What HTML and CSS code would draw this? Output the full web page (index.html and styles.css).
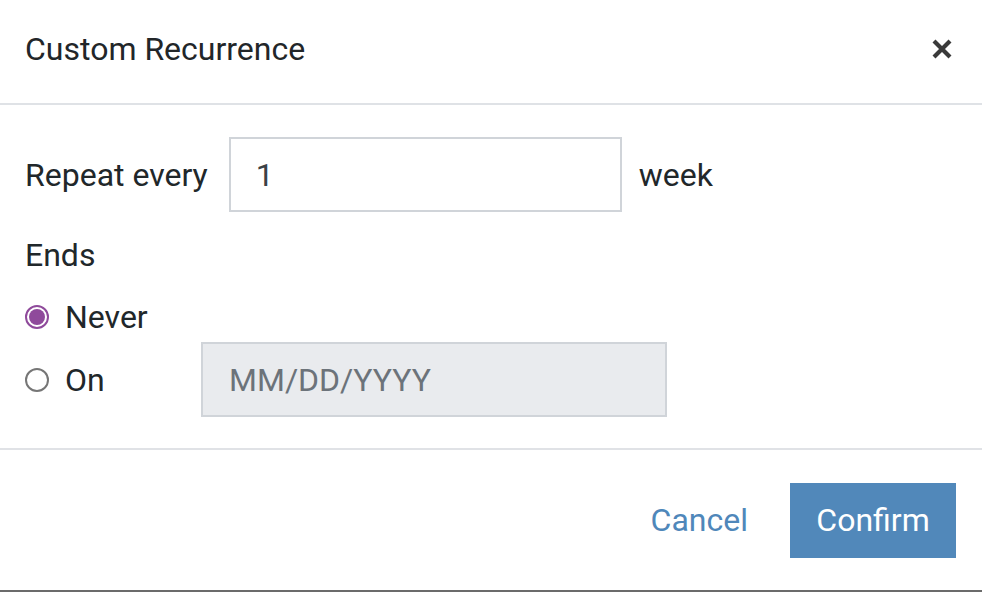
FILE: index.html
```html
<!DOCTYPE html>
<html>
<head>
<meta charset="utf-8">
<link rel="stylesheet" href="styles.css">
</head>
<body>
<div class="modal">
  <div class="header">
    <h1 class="title">Custom Recurrence</h1>
    <button class="close" aria-label="Close">
      <svg width="22" height="22" viewBox="0 0 22 22"><path d="M3 3 L19 19 M19 3 L3 19" stroke="#3a3a3a" stroke-width="4.2" stroke-linecap="butt"/></svg>
    </button>
  </div>
  <div class="content">
    <div class="repeat-row">
      <span class="label">Repeat every</span>
      <div class="input num">1</div>
      <span class="label">week</span>
    </div>
    <div class="ends">Ends</div>
    <div class="radio-row never">
      <span class="radio checked"></span>
      <span class="label">Never</span>
    </div>
    <div class="radio-row on">
      <span class="radio"></span>
      <span class="label on-label">On</span>
      <div class="input date">MM/DD/YYYY</div>
    </div>
  </div>
  <div class="footer">
    <span class="cancel">Cancel</span>
    <span class="confirm">Confirm</span>
  </div>
</div>
</body>
</html>
```
FILE: styles.css
```css
html, body {
  margin: 0;
  padding: 0;
  background: #ffffff;
}
body {
  font-family: Roboto, "Liberation Sans", sans-serif;
  color: #21272a;
}
.modal {
  width: 982px;
  height: 592px;
  box-sizing: border-box;
  border-bottom: 2px solid #6b6b6b;
  display: flex;
  flex-direction: column;
}
.header {
  border-bottom: 2px solid #dfe2e6;
  display: flex;
  align-items: center;
  justify-content: space-between;
  padding: 0 29px 6px 25px;
  box-sizing: border-box;
  height: 105px;
}
.title {
  margin: 0;
  font-size: 32px;
  font-weight: 400;
  color: #222629;
}
.close {
  border: 0;
  background: none;
  padding: 0;
  width: 22px;
  height: 22px;
  display: flex;
}
.content {
  padding: 32px 25px 0 25px;
  height: 345px;
  box-sizing: border-box;
  border-bottom: 2px solid #e0e2e6;
}
.label {
  font-size: 32px;
}
.repeat-row {
  display: flex;
  align-items: center;
  height: 75px;
}
.input {
  box-sizing: border-box;
  height: 75px;
  border: 2px solid #d0d4d9;
  font-size: 32px;
  display: flex;
  align-items: center;
  padding-left: 25px;
}
.repeat-row .num {
  width: 393px;
  margin: 0 17px 0 21px;
  color: #3b4146;
}
.ends {
  font-size: 32px;
  margin-top: 25px;
  height: 36px;
  line-height: 36px;
}
.radio-row {
  display: flex;
  align-items: center;
}
.never {
  margin-top: 24px;
  height: 40px;
}
.on {
  margin-top: 5px;
  height: 75px;
}
.radio {
  width: 24px;
  height: 24px;
  box-sizing: border-box;
  border-radius: 50%;
  border: 2px solid #767676;
  margin-right: 16px;
  position: relative;
}
.radio.checked {
  border-color: #8f4a9b;
}
.radio.checked::after {
  content: "";
  position: absolute;
  left: 2px;
  top: 2px;
  width: 16px;
  height: 16px;
  border-radius: 50%;
  background: #8f4a9b;
}
.on-label {
  width: 136px;
}
.date {
  width: 466px;
  height: 75px;
  background: #e9ebee;
  color: #6c737a;
  padding-left: 26px;
}
.footer {
  flex: 1;
  display: flex;
  align-items: center;
  justify-content: flex-end;
  padding: 0 26px 0 0;
}
.cancel {
  font-size: 32px;
  color: #4f87ba;
  margin-right: 42px;
}
.confirm {
  width: 166px;
  height: 75px;
  background: #5188ba;
  color: #ffffff;
  font-size: 32px;
  display: flex;
  align-items: center;
  justify-content: center;
}
```
